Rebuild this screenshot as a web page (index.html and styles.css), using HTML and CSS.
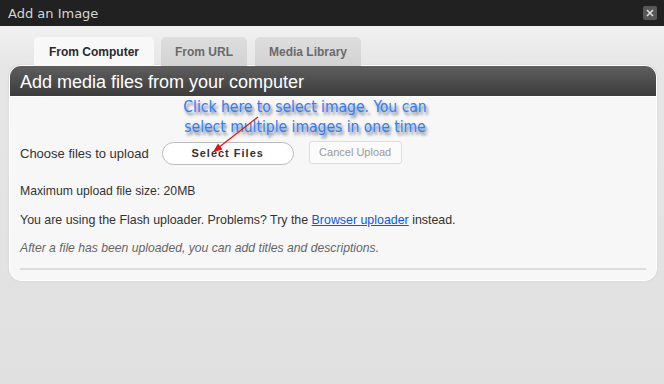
FILE: index.html
```html
<!DOCTYPE html>
<html lang="en">
<head>
    <meta charset="UTF-8">
    <title>Add an Image</title>
    <link rel="stylesheet" href="styles.css">
</head>
<body>
<div class="titlebar">
    <span class="title">Add an Image</span>
    <span class="close">
        <svg width="14" height="14" viewBox="0 0 14 14"><path d="M4 4 L10 10 M10 4 L4 10" stroke="#ddd" stroke-width="1.6"/></svg>
    </span>
</div>

<div class="main">
    <ul class="tabs">
        <li class="current">From Computer</li>
        <li>From URL</li>
        <li>Media Library</li>
    </ul>

    <div class="panel">
        <h3 class="panel-head">Add media files from your computer</h3>
        <div class="panel-body">
            <!-- note drawn over the screenshot -->
            <div class="note">Click here to select image. You can<br>select multiple images in one time</div>
            <svg class="arrow" width="60" height="45" viewBox="0 0 60 45">
                <path d="M48 1 L8 32" stroke="#e81010" stroke-width="1.2" fill="none"/>
                <path d="M3 36 L12.5 33.5 L8 27.5 Z" fill="#e81010"/>
            </svg>

            <div class="upload-row">
                <span class="label">Choose files to upload</span>
                <span class="btn-select">Select Files</span>
                <span class="btn-cancel">Cancel Upload</span>
            </div>
            <p>Maximum upload file size: 20MB</p>
            <p class="flash">You are using the Flash uploader. Problems? Try the <a href="#">Browser uploader</a> instead.</p>
            <p class="hint">After a file has been uploaded, you can add titles and descriptions.</p>
            <div class="rule"></div>
        </div>
    </div>
</div>
</body>
</html>
```

FILE: styles.css
```css
body, ul, li, p, h3 {
    margin: 0;
    padding: 0;
    list-style: none;
}

body {
    background: #e0e0e0;
    font-family: "Liberation Sans", Arial, sans-serif;
    font-size: 12px;
    color: #333;
}

.titlebar {
    height: 26px;
    background: #212121;
    display: flex;
    align-items: center;
    justify-content: space-between;
    padding: 0 7px 0 8px;
}

.title {
    font-family: "DejaVu Sans", sans-serif;
    font-size: 13px;
    color: #d4d4d4;
}

.close {
    width: 14px;
    height: 14px;
    background: #575757;
    border-radius: 2px;
    display: flex;
}

.main {
    background: linear-gradient(#f1f1f1, #e6e6e6 40px, #e0e0e0);
    padding: 11px 7px 102px 9px;
}

.tabs {
    display: flex;
    gap: 7px;
    padding-left: 25px;
}

.tabs li {
    height: 29px;
    line-height: 31px;
    padding: 0 14px;
    font-weight: bold;
    color: #6a6a6a;
    background: linear-gradient(#dedede, #d2d2d2);
    border-radius: 5px 5px 0 0;
    cursor: pointer;
}

.tabs li.current {
    padding: 0 15px;
    color: #2a2a2a;
    background: #f8f8f8;
}

.tabs li + li + li {
    margin-left: 1px;
}

.panel {
    background: #f7f7f7;
    border: 1px solid #fff;
    border-radius: 12px;
    box-shadow: 0 0 2px #c8c8c8;
    margin-top: -1px;
}

.panel-head {
    height: 30px;
    line-height: 32px;
    padding-left: 10px;
    font-size: 18px;
    font-weight: normal;
    color: #fff;
    background: linear-gradient(#5e5e5e, #3c3c3c);
    border-radius: 11px 11px 0 0;
    border-bottom: 1px solid #fff;
}

.panel-body {
    position: relative;
    padding: 44px 10px 10px;
}

.note {
    position: absolute;
    left: 140px;
    top: 0;
    width: 310px;
    text-align: center;
    font-family: "DejaVu Sans Condensed", "DejaVu Sans", sans-serif;
    font-size: 15.5px;
    line-height: 20px;
    color: #2a80ff;
    text-shadow: 2px 3px 3px rgba(0, 0, 0, 0.55);
}

.arrow {
    position: absolute;
    left: 200px;
    top: 19px;
}

.upload-row {
    display: flex;
    align-items: center;
    gap: 15px;
    height: 25px;
}

.label {
    font-size: 13px;
    margin-right: -2px;
}

.btn-select {
    width: 130px;
    height: 21px;
    line-height: 21px;
    text-align: center;
    border: 1px solid #bbb;
    border-radius: 12px;
    background: #fff;
    font-size: 11px;
    font-weight: bold;
    letter-spacing: 1px;
    color: #333;
}

.btn-cancel {
    width: 91px;
    height: 21px;
    line-height: 21px;
    text-align: center;
    border: 1px solid #ddd;
    border-radius: 3px;
    background: #fbfbfb;
    font-size: 11px;
    color: #999;
    margin-top: -2px;
}

.panel-body p {
    font-size: 12.2px;
    line-height: 15px;
    margin-top: 14px;
}

.panel-body p:first-of-type {
    margin-top: 18px;
}

.panel-body p.flash {
    font-size: 12.4px;
}

.panel-body a {
    color: #0b5ad8;
}

.panel-body .hint {
    font-style: italic;
    color: #666;
    margin-top: 13px;
}

.rule {
    height: 2px;
    background: #dcdcdc;
    margin-top: 12px;
}
```
